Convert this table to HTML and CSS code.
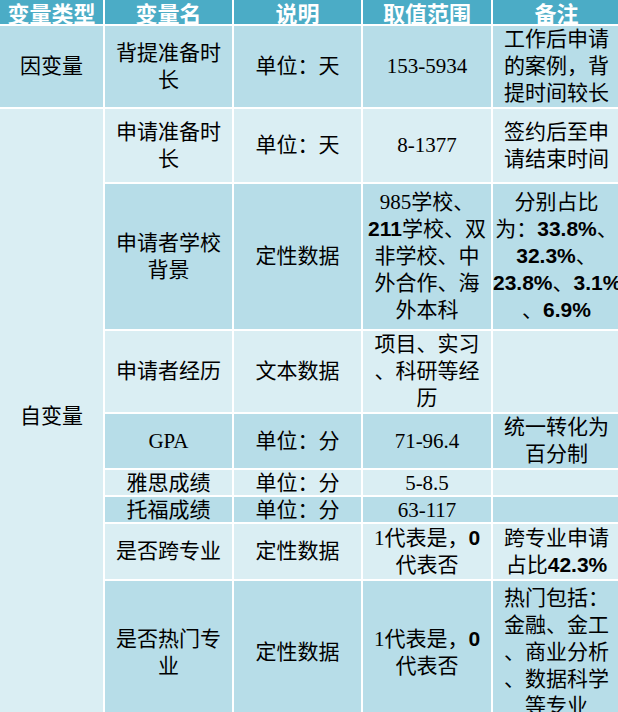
FILE: index.html
```html
<!DOCTYPE html>
<html lang="zh-CN">
<head>
<meta charset="utf-8">
<title>变量说明</title>
<link rel="stylesheet" href="styles.css">
</head>
<body>
<table class="vars">
  <colgroup>
    <col class="c1"><col class="c2"><col class="c3"><col class="c4"><col class="c5">
  </colgroup>
  <thead>
    <tr class="h-head">
      <th>变量类型</th><th>变量名</th><th>说明</th><th>取值范围</th><th>备注</th>
    </tr>
  </thead>
  <tbody>
    <tr class="dark h-r1">
      <td>因变量</td>
      <td>背提准备时<br>长</td>
      <td>单位：天</td>
      <td>153-5934</td>
      <td>工作后申请<br>的案例，背<br>提时间较长</td>
    </tr>
    <tr class="light h-r2">
      <td rowspan="9" class="side">自变量</td>
      <td>申请准备时<br>长</td>
      <td>单位：天</td>
      <td>8-1377</td>
      <td>签约后至申<br>请结束时间</td>
    </tr>
    <tr class="dark h-r3">
      <td>申请者学校<br>背景</td>
      <td>定性数据</td>
      <td>985学校、<br><span class="b">211</span>学校、双<br>非学校、中<br>外合作、海<br>外本科</td>
      <td>分别占比<br>为：<span class="b">33.8%</span>、<br><span class="b">32.3%</span>、<br><span class="b">23.8%</span>、<span class="b">3.1%</span><br>、<span class="b">6.9%</span></td>
    </tr>
    <tr class="light h-r4">
      <td>申请者经历</td>
      <td>文本数据</td>
      <td>项目、实习<br>、科研等经<br>历</td>
      <td></td>
    </tr>
    <tr class="dark h-r5">
      <td>GPA</td>
      <td>单位：分</td>
      <td>71-96.4</td>
      <td>统一转化为<br>百分制</td>
    </tr>
    <tr class="light h-r6 tight">
      <td>雅思成绩</td>
      <td>单位：分</td>
      <td>5-8.5</td>
      <td></td>
    </tr>
    <tr class="dark h-r7 tight">
      <td>托福成绩</td>
      <td>单位：分</td>
      <td>63-117</td>
      <td></td>
    </tr>
    <tr class="light h-r8">
      <td>是否跨专业</td>
      <td>定性数据</td>
      <td>1代表是，<span class="b">0</span><br>代表否</td>
      <td>跨专业申请<br>占比<span class="b">42.3%</span></td>
    </tr>
    <tr class="dark h-r9">
      <td>是否热门专<br>业</td>
      <td>定性数据</td>
      <td>1代表是，<span class="b">0</span><br>代表否</td>
      <td>热门包括：<br>金融、金工<br>、商业分析<br>、数据科学<br>等专业</td>
    </tr>
  </tbody>
</table>
</body>
</html>
```
FILE: styles.css
```css
html, body {
  margin: 0;
  padding: 0;
  background: #ffffff;
  overflow: hidden;
}

.vars {
  border-collapse: separate;
  border-spacing: 2px;
  background: #ffffff;
  table-layout: fixed;
  width: 624px;
  margin: -2px 0 0 -2px;
  font-family: "Liberation Serif", "Noto Sans CJK SC", serif;
  font-size: 21px;
  line-height: 27px;
  color: #000000;
}

.c1 { width: 103px; }
.c2 { width: 127px; }
.c3 { width: 127px; }
.c4 { width: 128px; }
.c5 { width: 127px; }

.vars th,
.vars td {
  padding: 0;
  text-align: center;
  vertical-align: middle;
  white-space: nowrap;
  overflow: visible;
}

.vars th {
  background: #4bacc6;
  color: #ffffff;
  font-family: "Noto Sans CJK SC", sans-serif;
  font-weight: 700;
  font-size: 22px;
  line-height: 24px;
  height: 24px;
}

.dark td { background: #b7dde8; }
.light td { background: #daeef3; }
.vars td.side { background: #daeef3; }

.h-r1 td { height: 81px; }
.h-r2 td { height: 73px; }
.h-r3 td { height: 145px; }
.h-r4 td { height: 81px; }
.h-r5 td { height: 51px; }
.h-r6 td { height: 25px; }
.h-r7 td { height: 25px; }
.h-r8 td { height: 55px; }
.h-r9 td { height: 143px; }

.vars td.side { height: auto; }

.tight td { line-height: 24px; }
.vars .tight td.side { line-height: 27px; }

.b {
  font-family: "Liberation Sans", sans-serif;
  font-weight: 700;
  line-height: 18px;
}
```
